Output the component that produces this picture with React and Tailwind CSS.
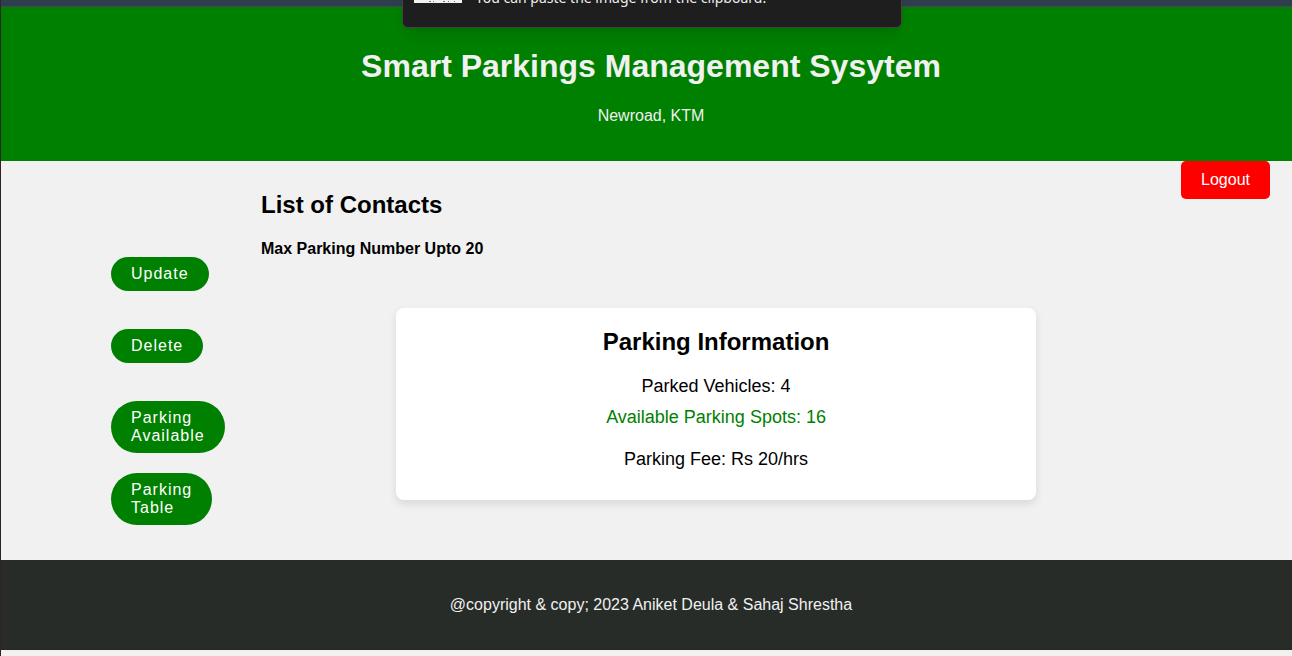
const actions = [
  { id: "update", lines: ["Update"] },
  { id: "delete", lines: ["Delete"] },
  { id: "available", lines: ["Parking", "Available"] },
  { id: "table", lines: ["Parking", "Table"] },
];

function Toast() {
  return (
    <div className="absolute inset-x-0 -top-12 flex justify-center pl-[10px]">
      <div
        role="status"
        className="flex h-[76px] w-[500px] items-start rounded-md border border-[#444444] bg-[#1e1e1e] px-[11px] shadow-lg"
      >
        <svg className="mt-[2px] h-12 w-12 shrink-0" viewBox="0 0 48 48" aria-hidden="true">
          <rect width="48" height="48" fill="#f4f1f1" />
          <path d="M15 46.500h2M19 46.500h1M29 46.500h2M34 46.500h1M40 46.500h1" stroke="#77706c" strokeWidth="1" />
        </svg>
        <p className="ml-[14px] mt-[35px] whitespace-nowrap font-['Noto_Sans',sans-serif] text-sm leading-5 text-[#eeeeee]">
          You can paste the image from the clipboard.
        </p>
      </div>
    </div>
  );
}

function Actions() {
  return (
    <nav aria-label="Parking actions" className="w-[150px] shrink-0 pt-24">
      <ul>
        {actions.map((action) => (
          <li key={action.id} className="h-[72px]">
            <button
              type="button"
              className="rounded-[30px] bg-[#008000] px-5 py-2 text-left text-base leading-[18px] tracking-[1px] text-white"
            >
              {action.lines.map((line) => (
                <span key={line} className="block">
                  {line}
                </span>
              ))}
            </button>
          </li>
        ))}
      </ul>
    </nav>
  );
}

function ParkingInformation() {
  return (
    <section className="mx-auto mt-[50px] w-full max-w-[640px] rounded-lg bg-white px-5 pt-5 pb-[31px] text-center text-lg shadow-[0_4px_8px_rgba(0,0,0,0.1)]">
      <h2 className="text-2xl leading-7 font-bold">Parking Information</h2>
      <p className="mt-5 leading-5">Parked Vehicles: 4</p>
      <p className="mt-[11px] leading-5 text-[#008000]">Available Parking Spots: 16</p>
      <p className="mt-[22px] leading-5">Parking Fee: Rs 20/hrs</p>
    </section>
  );
}

export default function App() {
  return (
    <div className="relative flex min-h-screen flex-col overflow-hidden border-l border-[#30241f] bg-[#f1f1f1] font-['Liberation_Sans',Arial,sans-serif] text-base text-black">
      <div className="h-[7px] border-b border-[#4a4650] bg-[#2f3e4e]" />
      <header className="bg-[#008000] pt-[41px] pb-9 pl-[9px] text-center text-[#f1f1f1]">
        <h1 className="text-[32px] leading-9 font-bold">Smart Parkings Management Sysytem</h1>
        <p className="mt-[23px] leading-[18px]">Newroad, KTM</p>
      </header>
      <main className="flex items-start pr-[22px] pb-[15px] pl-[110px]">
        <Actions />
        <div className="min-w-0 grow pt-[30px] pr-[10px]">
          <h2 className="text-2xl leading-7 font-bold">List of Contacts</h2>
          <h4 className="mt-[21px] leading-[18px] font-bold">Max Parking Number Upto 20</h4>
          <ParkingInformation />
        </div>
        <button
          type="button"
          className="shrink-0 rounded-[5px] bg-[#ff0000] px-5 py-[10px] leading-[18px] text-white"
        >
          Logout
        </button>
      </main>
      <footer className="border-b border-[#30241f] bg-[#282c28] pt-9 pb-[35px] pl-[9px] text-center leading-[18px] text-[#f1f1f1]">
        <p>@copyright &amp; copy; 2023 Aniket Deula &amp; Sahaj Shrestha</p>
      </footer>
      <Toast />
    </div>
  );
}
